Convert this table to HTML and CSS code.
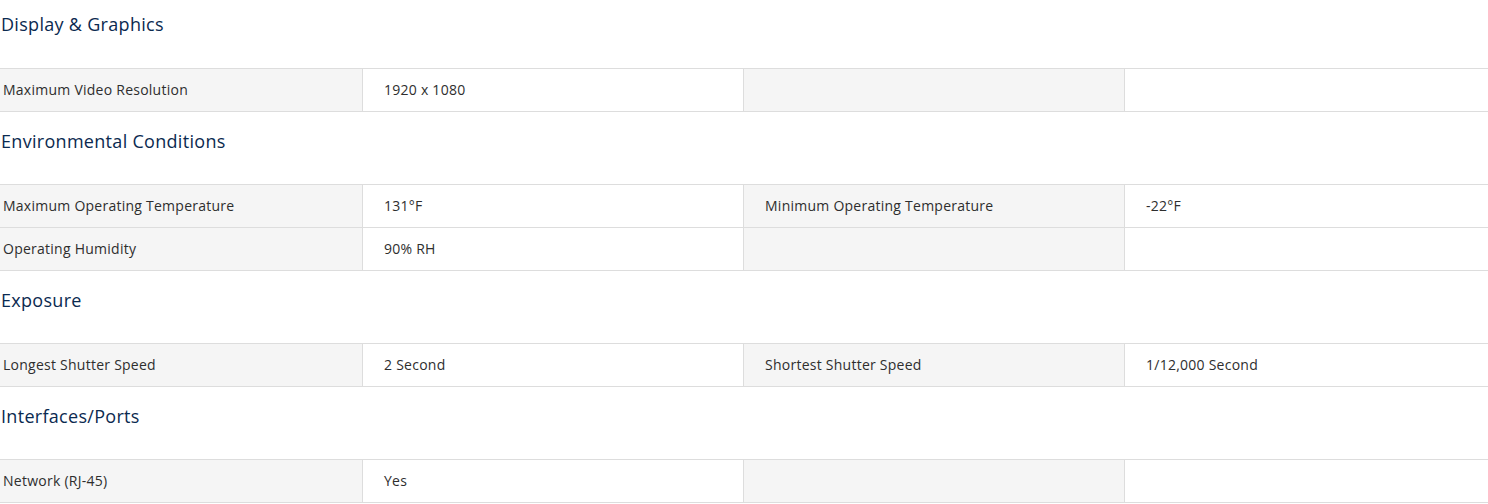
FILE: index.html
```html
<!DOCTYPE html>
<html lang="en">
<head>
<meta charset="utf-8">
<title>Specifications</title>
<link rel="stylesheet" href="styles.css">
</head>
<body>
<main class="specs">
  <section class="spec-group">
    <h2 class="spec-title">Display &amp; Graphics</h2>
    <div class="spec-table">
      <div class="spec-row">
        <div class="cell label">Maximum Video Resolution</div>
        <div class="cell value">1920 x 1080</div>
        <div class="cell label"></div>
        <div class="cell value"></div>
      </div>
    </div>
  </section>
  <section class="spec-group">
    <h2 class="spec-title">Environmental Conditions</h2>
    <div class="spec-table">
      <div class="spec-row">
        <div class="cell label">Maximum Operating Temperature</div>
        <div class="cell value">131°F</div>
        <div class="cell label">Minimum Operating Temperature</div>
        <div class="cell value">-22°F</div>
      </div>
      <div class="spec-row">
        <div class="cell label">Operating Humidity</div>
        <div class="cell value">90% RH</div>
        <div class="cell label"></div>
        <div class="cell value"></div>
      </div>
    </div>
  </section>
  <section class="spec-group">
    <h2 class="spec-title">Exposure</h2>
    <div class="spec-table">
      <div class="spec-row">
        <div class="cell label">Longest Shutter Speed</div>
        <div class="cell value">2 Second</div>
        <div class="cell label">Shortest Shutter Speed</div>
        <div class="cell value">1/12,000 Second</div>
      </div>
    </div>
  </section>
  <section class="spec-group">
    <h2 class="spec-title">Interfaces/Ports</h2>
    <div class="spec-table">
      <div class="spec-row">
        <div class="cell label">Network (RJ-45)</div>
        <div class="cell value">Yes</div>
        <div class="cell label"></div>
        <div class="cell value"></div>
      </div>
    </div>
  </section>
</main>
</body>
</html>
```

FILE: styles.css
```css
* {
  box-sizing: border-box;
}

html, body {
  margin: 0;
  padding: 0;
  background: #ffffff;
}

body {
  font-family: "Open Sans", "Noto Sans", Arial, sans-serif;
  color: #2e2e2e;
  width: 1488px;
  height: 504px;
  overflow: hidden;
}

.specs {
  display: flex;
  flex-direction: column;
}

.spec-title {
  margin: 0;
  padding: 17px 0 31px 1px;
  font-size: 18px;
  line-height: 24px;
  font-weight: 500;
  letter-spacing: 0.3px;
  color: #0b2a50;
}

.spec-group:first-child .spec-title {
  padding-top: 12px;
  padding-bottom: 32px;
}

.spec-table {
  border-top: 1px solid #dddddd;
}

.spec-row {
  display: grid;
  grid-template-columns: 362px 381px 381px 1fr;
  height: 43px;
  border-bottom: 1px solid #dddddd;
}

.cell {
  display: flex;
  align-items: center;
  font-size: 14px;
  line-height: 20px;
  letter-spacing: 0.25px;
  padding-left: 21px;
  border-left: 1px solid #dddddd;
}

.cell:first-child {
  padding-left: 3px;
  border-left: none;
}

.label {
  background: #f5f5f5;
}

.value {
  background: #ffffff;
}
```
